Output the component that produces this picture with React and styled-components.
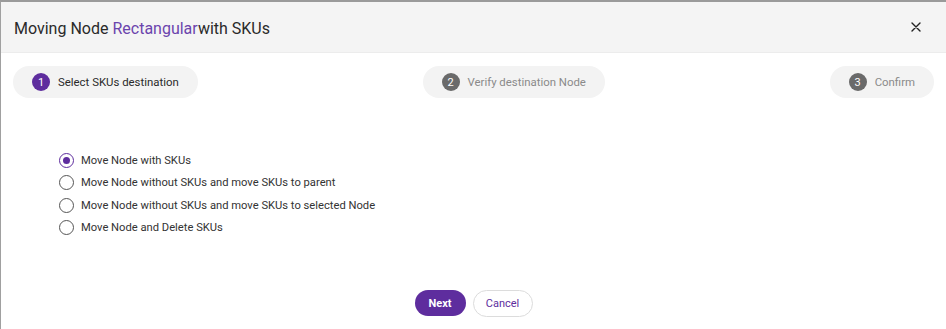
import React from 'react';
import styled, { createGlobalStyle } from 'styled-components';

const GlobalStyle = createGlobalStyle`
  html, body {
    margin: 0;
    padding: 0;
    background: #ffffff;
  }
  body {
    font-family: Roboto, "Liberation Sans", sans-serif;
  }
`;

const steps = [
  { n: 1, label: 'Select SKUs destination', active: true },
  { n: 2, label: 'Verify destination Node' },
  { n: 3, label: 'Confirm' },
];

const options = [
  'Move Node with SKUs',
  'Move Node without SKUs and move SKUs to parent',
  'Move Node without SKUs and move SKUs to selected Node',
  'Move Node and Delete SKUs',
];

const App = () => {
  return (
    <>
      <GlobalStyle />
      <Dialog>
        <Header>
          <Title>
            Moving Node <Accent>Rectangular</Accent>with SKUs
          </Title>
          <CloseButton aria-label="close">
            <svg width="10" height="10" viewBox="0 0 10 10">
              <path d="M1 1 L9 9 M9 1 L1 9" stroke="#222" strokeWidth="1.4" strokeLinecap="round" />
            </svg>
          </CloseButton>
        </Header>
        <Stepper>
          {steps.map((s) => (
            <Step key={s.n}>
              <StepNumber $active={s.active}>{s.n}</StepNumber>
              <StepLabel $active={s.active}>{s.label}</StepLabel>
            </Step>
          ))}
        </Stepper>
        <RadioList>
          {options.map((o, i) => (
            <RadioRow key={o}>
              <Radio $checked={i === 0} />
              <RadioLabel>{o}</RadioLabel>
            </RadioRow>
          ))}
        </RadioList>
        <Footer>
          <PrimaryButton>Next</PrimaryButton>
          <SecondaryButton>Cancel</SecondaryButton>
        </Footer>
      </Dialog>
    </>
  );
};

const Dialog = styled.div`
  width: 946px;
  height: 329px;
  box-sizing: border-box;
  border-top: 2px solid #9a9a9a;
  border-left: 1px solid #a0a0a0;
  display: flex;
  flex-direction: column;
  background: #fff;
`;

const Header = styled.div`
  height: 50px;
  background: #f4f4f4;
  display: flex;
  align-items: center;
  justify-content: space-between;
  padding: 0 20px 0 13px;
  border-bottom: 1px solid #ececec;
`;

const Title = styled.div`
  font-size: 16px;
  color: #2a2a2a;
  padding-top: 2px;
`;

const Accent = styled.span`
  color: #6b44ad;
`;

const CloseButton = styled.button`
  border: none;
  background: transparent;
  padding: 0;
  width: 20px;
  height: 20px;
  display: flex;
  align-items: center;
  justify-content: center;
  cursor: pointer;
`;

const Stepper = styled.div`
  display: flex;
  justify-content: space-between;
  padding: 13px 12px 0 12px;
`;

const Step = styled.div`
  height: 32px;
  display: flex;
  align-items: center;
  gap: 8px;
  padding: 0 19px;
  background: #f3f3f3;
  border-radius: 16px;
`;

const StepNumber = styled.div`
  width: 18px;
  height: 18px;
  border-radius: 50%;
  background: ${(p) => (p.$active ? '#5e2d9e' : '#6a6a6a')};
  color: #fff;
  font-size: 11px;
  display: flex;
  align-items: center;
  justify-content: center;
`;

const StepLabel = styled.span`
  font-size: 11.4px;
  color: ${(p) => (p.$active ? '#2a2a2a' : '#8a8a8a')};
`;

const RadioList = styled.div`
  display: flex;
  flex-direction: column;
  gap: 8.5px;
  padding: 55px 0 0 58px;
`;

const RadioRow = styled.label`
  display: flex;
  align-items: center;
  gap: 7px;
  height: 14px;
`;

const Radio = styled.span`
  width: 15px;
  height: 15px;
  box-sizing: border-box;
  border-radius: 50%;
  border: 1.6px solid ${(p) => (p.$checked ? '#5e2d9e' : '#555')};
  display: flex;
  align-items: center;
  justify-content: center;
  &::after {
    content: '';
    display: ${(p) => (p.$checked ? 'block' : 'none')};
    width: 7px;
    height: 7px;
    border-radius: 50%;
    background: #5e2d9e;
  }
`;

const RadioLabel = styled.span`
  font-size: 11.2px;
  color: #333;
`;

const Footer = styled.div`
  margin-top: auto;
  display: flex;
  justify-content: center;
  gap: 7px;
  padding-bottom: 12px;
`;

const PrimaryButton = styled.button`
  height: 26px;
  width: 51px;
  border: none;
  border-radius: 13px;
  background: #5e2d9e;
  color: #fff;
  font-family: Roboto, "Liberation Sans", sans-serif;
  font-size: 11px;
  font-weight: 700;
  cursor: pointer;
`;

const SecondaryButton = styled.button`
  height: 27px;
  width: 60px;
  border: 1px solid #dcdcdc;
  border-radius: 14px;
  background: #fff;
  color: #5e2d9e;
  font-family: Roboto, "Liberation Sans", sans-serif;
  font-size: 11px;
  cursor: pointer;
`;

export default App;
